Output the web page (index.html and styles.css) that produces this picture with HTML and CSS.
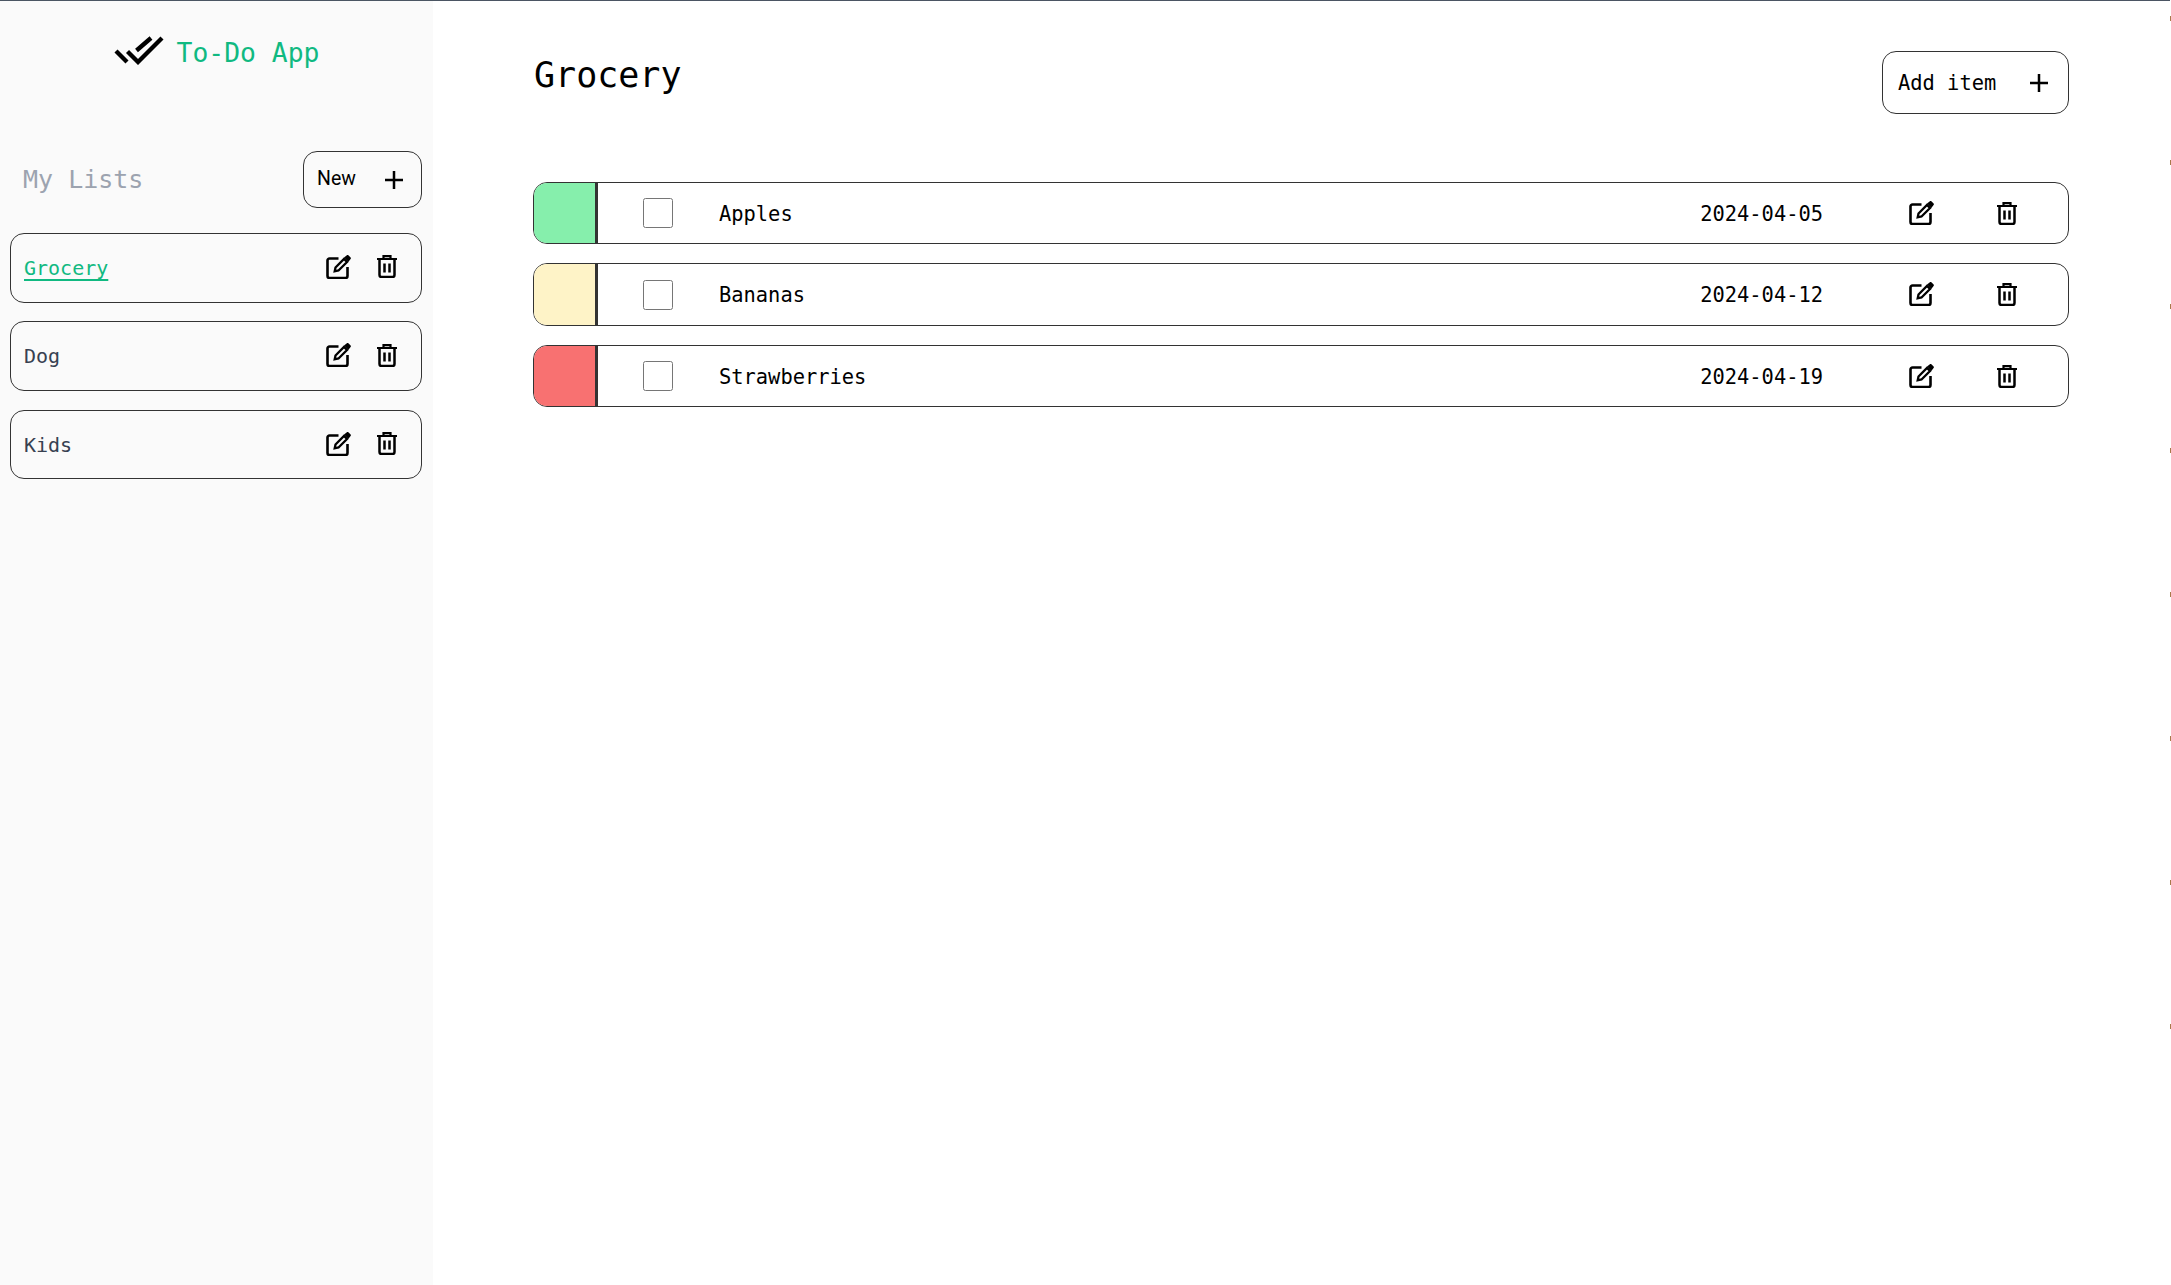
FILE: index.html
```html
<!DOCTYPE html>
<html lang="en">
<head>
<meta charset="utf-8">
<title>To-Do App</title>
<link rel="stylesheet" href="styles.css">
</head>
<body>
<svg class="defs" width="0" height="0" aria-hidden="true">
  <symbol id="edit" viewBox="0 0 25 24">
    <path d="M12.5 3.5H3.5a2 2 0 0 0-2 2V21a2 2 0 0 0 2 2H19.5a2 2 0 0 0 2-2V12" fill="none" stroke="currentColor" stroke-width="2.6"/>
    <path d="M9.5 12.5L18 4l3 3-8.5 8.5-3.8.8z" fill="none" stroke="currentColor" stroke-width="2.3"/>
    <path d="M18 2.500L20.600.4a1.400 1.400 0 0 1 2 0l1.800 1.800a1.400 1.400 0 0 1 0 2L22.300 7z" fill="currentColor"/>
  </symbol>
  <symbol id="trash" viewBox="0 0 20 23">
    <path d="M0 4H20M6.500 4V1.200H13.500V4" fill="none" stroke="currentColor" stroke-width="2.200"/>
    <path d="M2.500 4V20a2 2 0 0 0 2 2H15.500a2 2 0 0 0 2-2V4M7.500 8.500V17.500M12.500 8.500V17.500" fill="none" stroke="currentColor" stroke-width="2.500"/>
  </symbol>
  <symbol id="plus" viewBox="0 0 18 18">
    <path d="M9 0V18M0 9H18" fill="none" stroke="currentColor" stroke-width="2.500"/>
  </symbol>
</svg>
<div class="app">
  <aside class="sidebar">
    <div class="brand">
      <svg class="brand-icon" viewBox="0 0 50 30" aria-hidden="true"><path d="M2 16L13 27M13.500 16.500L24 27L48 3M22.500 15.500L37 3" fill="none" stroke="currentColor" stroke-width="4.300"/></svg>
      <span class="brand-name">To-Do App</span>
    </div>
    <div class="lists-head">
      <h2 class="lists-title">My Lists</h2>
      <button class="btn btn-new"><span class="new-label">New</span><svg class="icon-plus"><use href="#plus"/></svg></button>
    </div>
    <ul class="lists">
      <li class="list-card"><a class="list-name active">Grocery</a><svg class="icon-edit"><use href="#edit"/></svg><svg class="icon-trash"><use href="#trash"/></svg></li>
      <li class="list-card"><a class="list-name">Dog</a><svg class="icon-edit"><use href="#edit"/></svg><svg class="icon-trash"><use href="#trash"/></svg></li>
      <li class="list-card"><a class="list-name">Kids</a><svg class="icon-edit"><use href="#edit"/></svg><svg class="icon-trash"><use href="#trash"/></svg></li>
    </ul>
  </aside>
  <main class="main">
    <header class="main-head">
      <h1 class="main-title">Grocery</h1>
      <button class="btn btn-add"><span>Add item</span><svg class="icon-plus"><use href="#plus"/></svg></button>
    </header>
    <ul class="items">
      <li class="item"><span class="swatch swatch-green"></span><input class="check" type="checkbox"><span class="item-name">Apples</span><span class="item-date">2024-04-05</span><svg class="icon-edit item-edit"><use href="#edit"/></svg><svg class="icon-trash item-trash"><use href="#trash"/></svg></li>
      <li class="item"><span class="swatch swatch-yellow"></span><input class="check" type="checkbox"><span class="item-name">Bananas</span><span class="item-date">2024-04-12</span><svg class="icon-edit item-edit"><use href="#edit"/></svg><svg class="icon-trash item-trash"><use href="#trash"/></svg></li>
      <li class="item"><span class="swatch swatch-red"></span><input class="check" type="checkbox"><span class="item-name">Strawberries</span><span class="item-date">2024-04-19</span><svg class="icon-edit item-edit"><use href="#edit"/></svg><svg class="icon-trash item-trash"><use href="#trash"/></svg></li>
    </ul>
  </main>
</div>
<div class="edge-marks"></div>
</body>
</html>
```
FILE: styles.css
```css
* { box-sizing: border-box; }
html, body { margin: 0; padding: 0; height: 100%; overflow: hidden; }
body {
  background: #fff;
  color: #000;
  font-family: "DejaVu Sans Mono", "Liberation Mono", monospace;
  font-size: 20.4px;
}
.defs { position: absolute; }
.app {
  display: flex;
  width: 2170px;
  height: 1285px;
  border-top: 1px solid #4b5563;
}
.sidebar {
  width: 433px;
  flex: none;
  background: #fafafa;
  padding: 0 11px 0 10px;
}
.brand {
  height: 100px;
  margin-bottom: 50px;
  display: flex;
  align-items: center;
  justify-content: center;
  gap: 13px;
  color: #000;
  padding-left: 1px;
}
.brand-icon { width: 50px; height: 30px; flex: none; margin-top: -2px; }
.brand-name { color: #10b981; font-size: 26.4px; margin-top: 2px; }
.lists-head {
  height: 57px;
  display: flex;
  align-items: center;
  justify-content: space-between;
  padding-left: 13px;
  margin-bottom: 25px;
}
.lists-title { margin: 0; font-weight: 400; font-size: 25px; color: #9ca3af; }
.btn {
  display: flex;
  align-items: center;
  justify-content: space-between;
  background: transparent;
  border: 1px solid #333;
  border-radius: 14px;
  font: inherit;
  color: #000;
  padding: 0;
}
.btn-new { width: 119px; height: 57px; padding: 0 18px 0 13px; }
.new-label { font-family: Roboto, sans-serif; font-size: 19.500px; margin-top: -2px; }
.btn-add { width: 187px; height: 63px; padding: 0 20px 0 15px; }
.icon-plus { width: 18px; height: 18px; flex: none; }
.lists, .items { list-style: none; margin: 0; padding: 0; display: flex; flex-direction: column; }
.lists { gap: 18.800px; }
.list-card {
  height: 69.600px;
  display: flex;
  align-items: center;
  border: 1px solid #333;
  border-radius: 14px;
  padding: 0 24px 0 13px;
}
.list-name { flex: 1; color: #374151; font-size: 20px; }
.list-name.active { color: #10b981; text-decoration: underline; text-underline-offset: 4px; }
.icon-edit { width: 25px; height: 24px; flex: none; color: #000; margin-top: -2px; }
.icon-trash { width: 20px; height: 23px; flex: none; color: #000; margin-left: 26px; margin-top: -2px; }
.main { flex: 1; padding: 50px 101px 0 101px; }
.main-head { display: flex; justify-content: space-between; align-items: flex-start; height: 63px; margin-bottom: 68px; }
.main-title { margin: 0; font-weight: 400; font-size: 35px; line-height: 48px; }
.items { gap: 19.100px; margin-left: -1px; }
.item {
  height: 62.400px;
  display: flex;
  align-items: center;
  border: 1px solid #333;
  border-radius: 14px;
  overflow: hidden;
}
.swatch { width: 64px; height: 100%; flex: none; border-right: 3px solid #333; }
.swatch-green { background: #86efac; }
.swatch-yellow { background: #fef3c7; }
.swatch-red { background: #f87171; }
.check { width: 30px; height: 30px; margin: 0 0 0 45px; flex: none; }
.item-name { margin-left: 46px; flex: 1; padding-top: 1px; }
.item-date { margin-right: 86px; padding-top: 1px; }
.item-edit { margin-top: -1px; }
.item-trash { margin-left: 63px; margin-right: 51px; margin-top: 0; }
.edge-marks {
  position: absolute;
  top: 16px;
  right: 0;
  width: 1px;
  height: 1015px;
  background: repeating-linear-gradient(to bottom, #a87a4a 0 5px, transparent 5px 144px);
}
```
